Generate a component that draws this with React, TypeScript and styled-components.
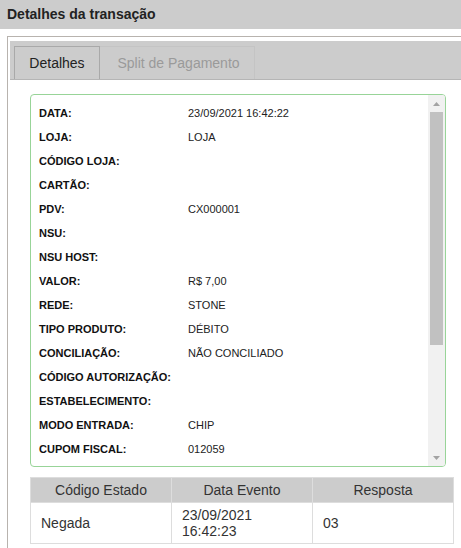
import styled, { createGlobalStyle } from 'styled-components';

const GlobalStyle = createGlobalStyle`
  *, *::before, *::after {
    box-sizing: border-box;
  }
  html, body {
    margin: 0;
    padding: 0;
    background: #ffffff;
    overflow: hidden;
  }
  body {
    font-family: 'Liberation Sans', Arial, sans-serif;
    color: #222;
  }
`;

const Page = styled.div`
  width: 461px;
  height: 548px;
  overflow: hidden;
`;

const TitleBar = styled.div`
  height: 29px;
  line-height: 29px;
  padding-left: 7px;
  background: #cccccc;
  font-size: 14px;
  font-weight: bold;
  color: #222;
`;

const Panel = styled.div`
  margin: 7px 0 0 7px;
  width: 480px;
  height: 540px;
  border: 1px solid #b8b3ae;
  padding: 4px 0 0 2px;
`;

const TabBar = styled.div`
  display: flex;
  align-items: flex-end;
  height: 39px;
  padding: 5px 0 0 4px;
  background: #cccccc;
  border-bottom: 1px solid #b5b5b5;
`;

const Tab = styled.div<{ $active?: boolean }>`
  width: ${(p) => (p.$active ? '86px' : '155px')};
  height: 33px;
  line-height: 32px;
  padding-left: ${(p) => (p.$active ? '0' : '3px')};
  font-size: 14px;
  white-space: nowrap;
  text-align: center;
  color: ${(p) => (p.$active ? '#222' : '#9a9a9a')};
  border: 1px solid ${(p) => (p.$active ? '#a9a9a9' : '#c4c4c4')};
  border-bottom: none;
  border-left: ${(p) => (p.$active ? '1px solid #a9a9a9' : 'none')};
`;

const Content = styled.div`
  padding: 14px 0 0 20px;
`;

const DetailBox = styled.div`
  display: flex;
  width: 416px;
  height: 373px;
  border: 1px solid #98d498;
  border-radius: 4px;
  overflow: hidden;
`;

const Rows = styled.div`
  flex: 1;
  padding: 6px 0 0 8px;
`;

const Row = styled.div`
  display: flex;
  align-items: center;
  height: 24px;
  font-size: 11px;
`;

const Label = styled.span`
  width: 149px;
  flex-shrink: 0;
  font-weight: bold;
  color: #111;
`;

const Value = styled.span`
  color: #222;
`;

const ScrollTrack = styled.div`
  width: 17px;
  flex-shrink: 0;
  display: flex;
  flex-direction: column;
  background: #f1f1f1;
`;

const ScrollButton = styled.div`
  height: 17px;
  display: flex;
  align-items: center;
  justify-content: center;
`;

const ScrollThumb = styled.div`
  height: 233px;
  margin: 0 2px;
  background: #c1c1c1;
`;

const ScrollSpacer = styled.div`
  flex: 1;
`;

const EventTable = styled.table`
  margin-top: 10px;
  width: 424px;
  border-collapse: collapse;
  table-layout: fixed;
  font-size: 14px;
  color: #333;
`;

const HeadCell = styled.th`
  height: 25px;
  padding: 0;
  background: #cccccc;
  border: 1px solid #dddddd;
  font-weight: normal;
  text-align: center;
`;

const BodyCell = styled.td`
  height: 41px;
  padding: 0 10px;
  line-height: 16px;
  border: 1px solid #dddddd;
  vertical-align: middle;
`;

function Arrow({ down }: { down?: boolean }) {
  return (
    <svg width="7" height="4" viewBox="0 0 7 4">
      <path d={down ? 'M0 0H7L3.5 4Z' : 'M0 4H7L3.5 0Z'} fill="#a3a3a3" />
    </svg>
  );
}

const details: [string, string][] = [
  ['DATA:', '23/09/2021 16:42:22'],
  ['LOJA:', 'LOJA'],
  ['CÓDIGO LOJA:', ''],
  ['CARTÃO:', ''],
  ['PDV:', 'CX000001'],
  ['NSU:', ''],
  ['NSU HOST:', ''],
  ['VALOR:', 'R$ 7,00'],
  ['REDE:', 'STONE'],
  ['TIPO PRODUTO:', 'DÉBITO'],
  ['CONCILIAÇÃO:', 'NÃO CONCILIADO'],
  ['CÓDIGO AUTORIZAÇÃO:', ''],
  ['ESTABELECIMENTO:', ''],
  ['MODO ENTRADA:', 'CHIP'],
  ['CUPOM FISCAL:', '012059'],
];

export default function App() {
  return (
    <Page>
      <GlobalStyle />
      <TitleBar>Detalhes da transação</TitleBar>
      <Panel>
        <TabBar>
          <Tab $active>Detalhes</Tab>
          <Tab>Split de Pagamento</Tab>
        </TabBar>
        <Content>
          <DetailBox>
            <Rows>
              {details.map(([label, value]) => (
                <Row key={label}>
                  <Label>{label}</Label>
                  <Value>{value}</Value>
                </Row>
              ))}
            </Rows>
            <ScrollTrack>
              <ScrollButton>
                <Arrow />
              </ScrollButton>
              <ScrollThumb />
              <ScrollSpacer />
              <ScrollButton>
                <Arrow down />
              </ScrollButton>
            </ScrollTrack>
          </DetailBox>
          <EventTable>
            <thead>
              <tr>
                <HeadCell>Código Estado</HeadCell>
                <HeadCell>Data Evento</HeadCell>
                <HeadCell>Resposta</HeadCell>
              </tr>
            </thead>
            <tbody>
              <tr>
                <BodyCell>Negada</BodyCell>
                <BodyCell>
                  23/09/2021
                  <br />
                  16:42:23
                </BodyCell>
                <BodyCell>03</BodyCell>
              </tr>
            </tbody>
          </EventTable>
        </Content>
      </Panel>
    </Page>
  );
}
